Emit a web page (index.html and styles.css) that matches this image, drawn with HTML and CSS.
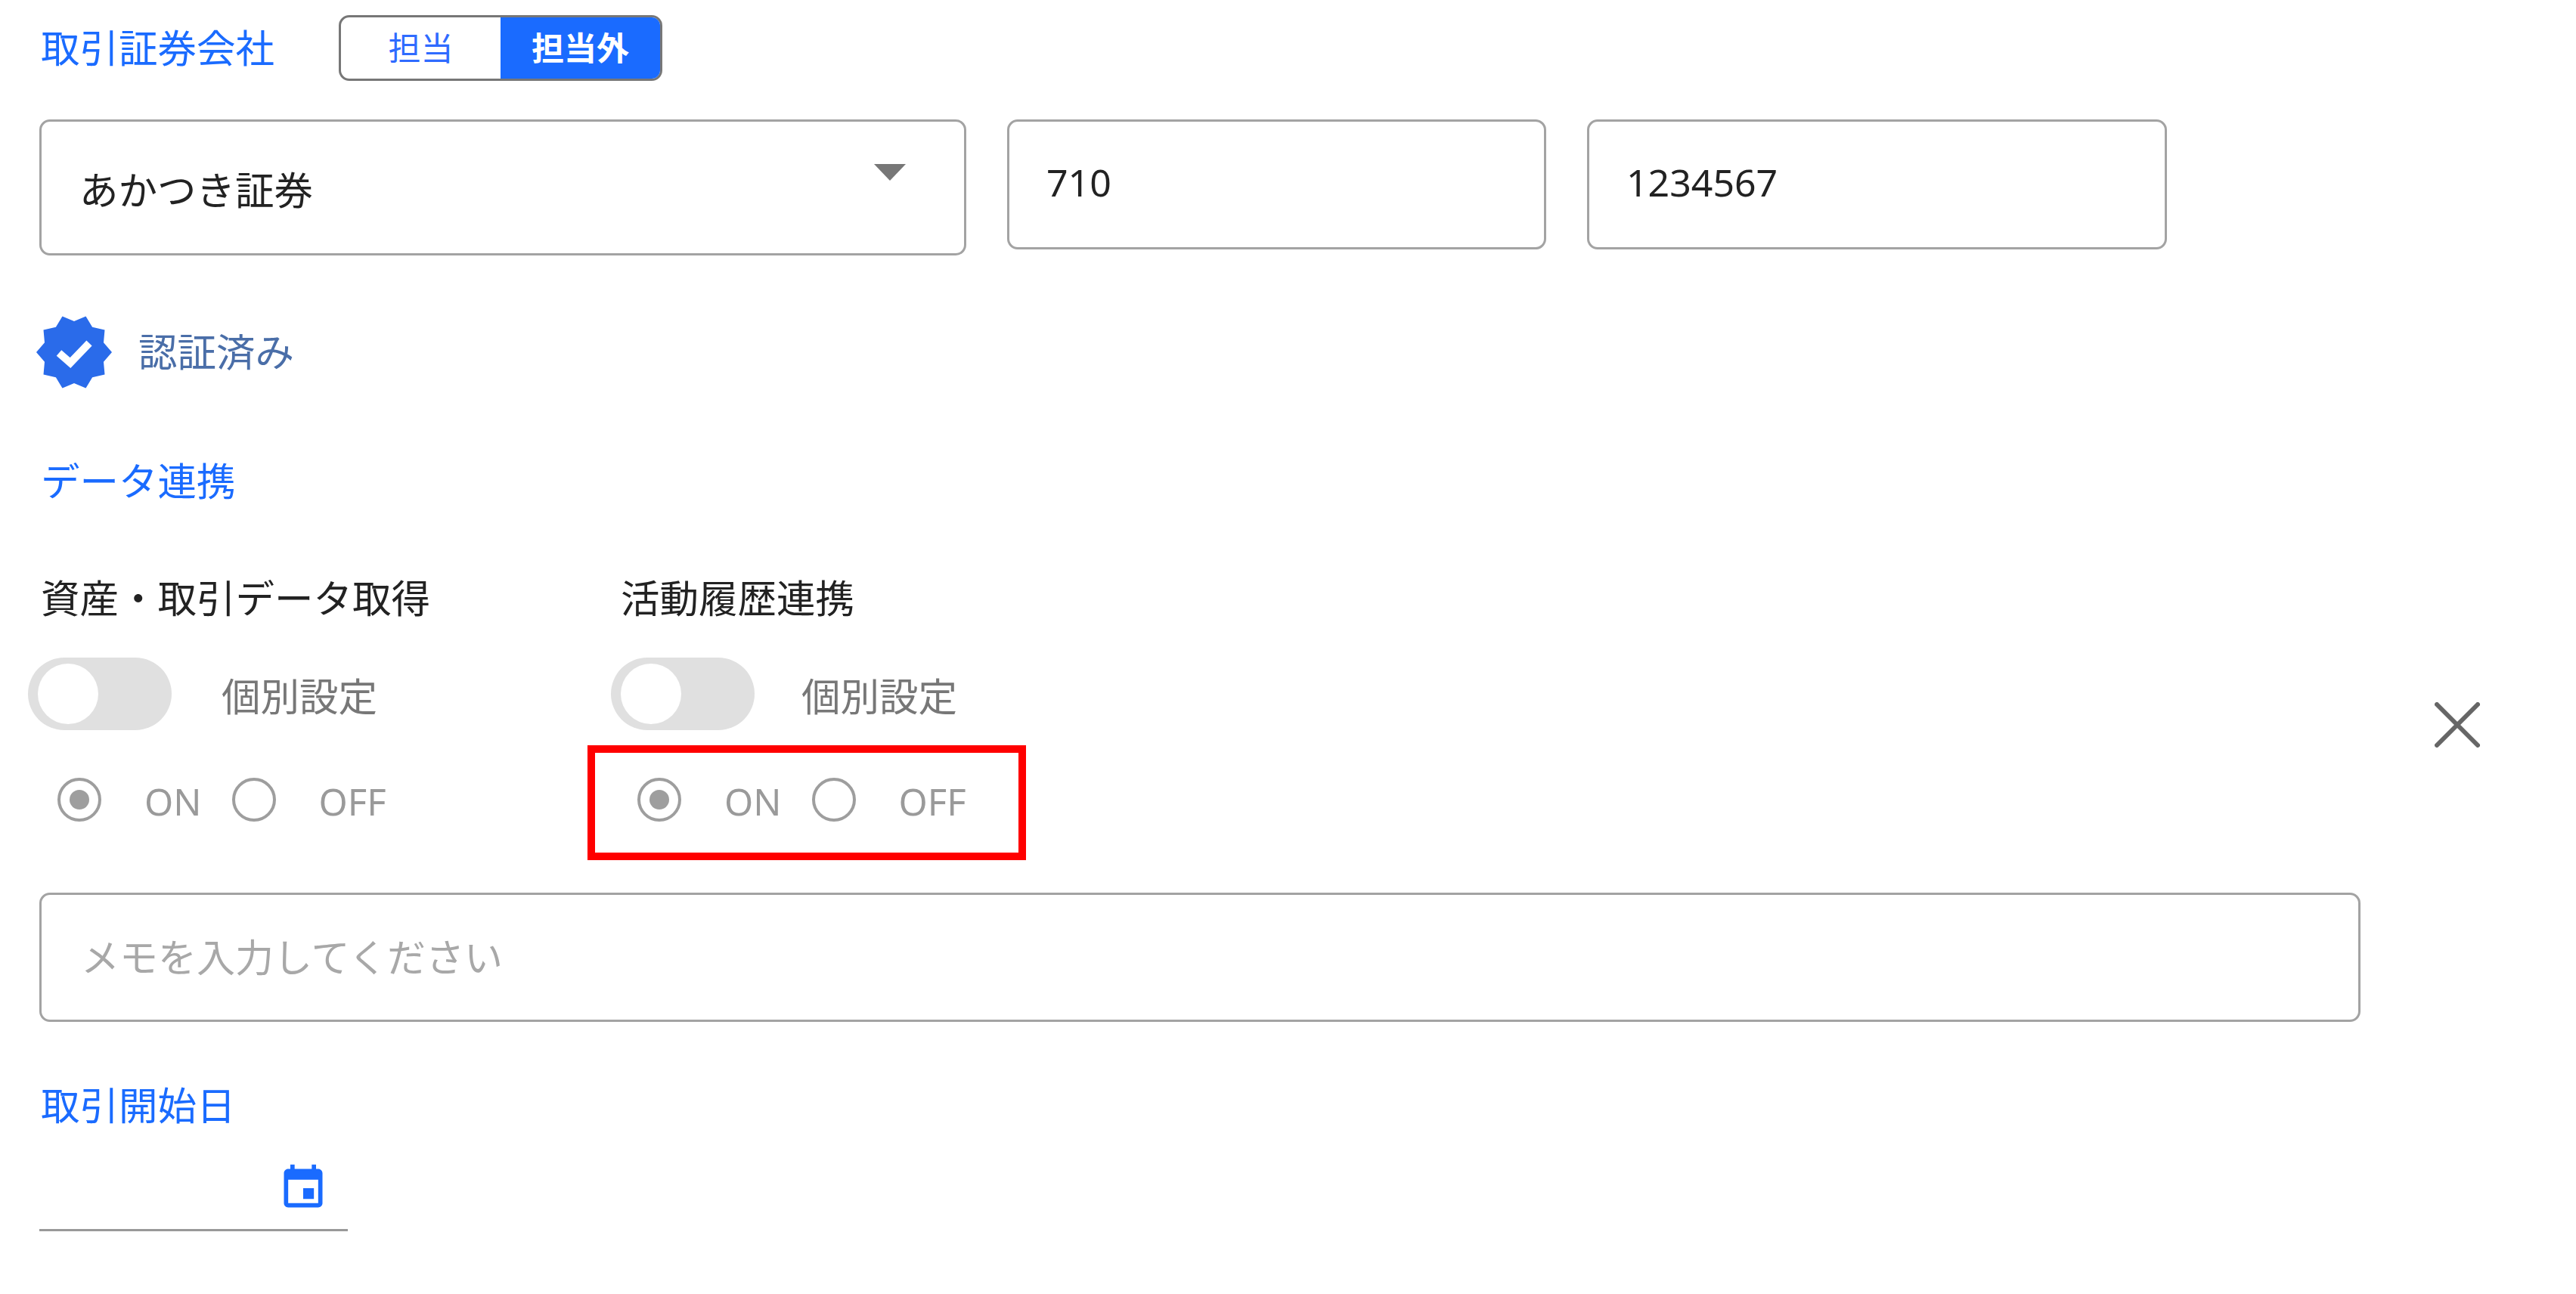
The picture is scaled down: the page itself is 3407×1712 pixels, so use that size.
FILE: index.html
```html
<!DOCTYPE html>
<html lang="ja">

<head>
    <meta charset="UTF-8">
    <title>取引証券会社</title>
    <link rel="stylesheet" href="styles.css">
</head>

<body>
    <div class="page">
        <form class="broker-form">
            <div class="head-row">
                <span class="label">取引証券会社</span>
                <div class="segmented">
                    <span class="segment">担当</span>
                    <span class="segment active">担当外</span>
                </div>
            </div>

            <div class="account-row">
                <div class="field select">
                    <span>あかつき証券</span>
                    <i class="arrow"></i>
                </div>
                <div class="field branch">710</div>
                <div class="field number">1234567</div>
            </div>

            <div class="verified">
                <svg class="badge" viewBox="0 0 100 100">
                    <polygon fill="#2a6bea" points="100,50 89,62.7 90.5,79.4 74.1,83.2 65.5,97.6 50,91 34.5,97.6 25.9,83.2 9.5,79.4 11,62.7 0,50 11,37.3 9.5,20.6 25.9,16.8 34.5,2.4 50,9 65.5,2.4 74.1,16.8 90.5,20.6 89,37.3" />
                    <polyline fill="none" stroke="#fff" stroke-width="10" points="30,51 45,64 70,38" />
                </svg>
                <span>認証済み</span>
            </div>

            <div class="label link-title">データ連携</div>

            <div class="link-columns">
                <div class="link-col">
                    <div class="col-title">資産・取引データ取得</div>
                    <div class="switch-row">
                        <span class="switch"><i></i></span>
                        <span>個別設定</span>
                    </div>
                    <div class="radio-row">
                        <span class="radio checked"></span>
                        <span class="on-text">ON</span>
                        <span class="radio"></span>
                        <span class="off-text">OFF</span>
                    </div>
                </div>
                <div class="link-col">
                    <div class="col-title">活動履歴連携</div>
                    <div class="switch-row">
                        <span class="switch"><i></i></span>
                        <span>個別設定</span>
                    </div>
                    <div class="radio-row">
                        <span class="radio checked"></span>
                        <span class="on-text">ON</span>
                        <span class="radio"></span>
                        <span class="off-text">OFF</span>
                        <div class="highlight"></div>
                    </div>
                </div>
            </div>

            <div class="field memo">メモを入力してください</div>

            <div class="label start-title">取引開始日</div>
            <div class="date-field">
                <svg class="calendar" viewBox="0 0 24 24">
                    <path fill="#1a6bff" d="M17 12h-5v5h5v-5zM16 1v2H8V1H6v2H5c-1.11 0-1.99.9-1.99 2L3 19c0 1.1.89 2 2 2h14c1.1 0 2-.9 2-2V5c0-1.1-.9-2-2-2h-1V1h-2zm3 18H5V8h14v11z" />
                </svg>
            </div>
        </form>

        <svg class="close" viewBox="0 0 60 60">
            <path d="M3 3L57 57M57 3L3 57" stroke="#666" stroke-width="6" stroke-linecap="round" />
        </svg>
    </div>
</body>

</html>
```

FILE: styles.css
```css
body {
    font-family: 'Noto Sans', 'Noto Sans CJK JP', sans-serif;
    font-size: 51.5px;
    line-height: 1;
    color: #222;
    background: #fff;
    margin: 0;
    padding: 0;
}

.page {
    display: flex;
    align-items: flex-start;
    padding: 20px 0 0 52px;
}

.broker-form {
    width: 3070px;
    flex-shrink: 0;
}

.close {
    width: 60px;
    height: 60px;
    margin: 909px 0 0 98px;
}

.label {
    color: #1a6bff;
    height: 51px;
    padding-left: 2px;
}

.head-row {
    display: flex;
    align-items: center;
}

.segmented {
    display: flex;
    width: 428px;
    height: 87px;
    margin-left: 85px;
    border: 3px solid #777;
    border-radius: 14px;
    box-sizing: border-box;
    overflow: hidden;
}

.segment {
    display: flex;
    justify-content: center;
    align-items: center;
    width: 214px;
    font-size: 43px;
    color: #2f6bff;

    &.active {
        flex-grow: 1;
        background: #1a6bff;
        color: #fff;
        font-weight: 700;
    }
}

.field {
    border: 3px solid #a3a3a3;
    border-radius: 14px;
    box-sizing: border-box;
    display: flex;
    align-items: center;
}

.account-row {
    display: flex;
    align-items: flex-start;
    gap: 54px;
    margin-top: 51px;
}

.select {
    justify-content: space-between;
    width: 1226px;
    height: 180px;
    padding: 8px 77px 0 50px;

    .arrow {
        width: 0;
        height: 0;
        margin-top: -48px;
        border-left: 21px solid transparent;
        border-right: 21px solid transparent;
        border-top: 22px solid #777;
    }
}

.branch,
.number {
    height: 172px;
    padding: 0 0 6px 49px;
    font-size: 50px;
}

.branch {
    width: 713px;
}

.number {
    width: 767px;
}

.verified {
    display: flex;
    align-items: center;
    gap: 35px;
    height: 96px;
    margin: 80px 0 0 -4px;
    color: #4a6ea8;

    .badge {
        width: 100px;
        height: 100px;
        flex-shrink: 0;
    }
}

.link-title {
    margin-top: 97px;
}

.link-columns {
    display: flex;
    margin-top: 104px;
}

.link-col {
    width: 767px;
}

.link-col + .link-col .switch-row {
    gap: 62px;
    margin-left: -11px;
}

.col-title {
    height: 51px;
    padding-left: 2px;
}

.switch-row {
    display: flex;
    align-items: center;
    gap: 66px;
    height: 96px;
    margin: 53px 0 0 -15px;
    color: #777;

    span:last-child {
        padding-top: 8px;
    }
}

.switch {
    display: block;
    width: 190px;
    height: 96px;
    padding: 8px 0 0 13px;
    box-sizing: border-box;
    background: #e0e0e0;
    border-radius: 48px;

    i {
        display: block;
        width: 80px;
        height: 80px;
        background: #fff;
        border-radius: 50%;
    }
}

.radio-row {
    position: relative;
    display: flex;
    align-items: center;
    height: 58px;
    margin: 63px 0 0 24px;
    font-size: 49px;
    color: #9a9a9a;
}

.radio {
    display: flex;
    justify-content: center;
    align-items: center;
    width: 58px;
    height: 58px;
    box-sizing: border-box;
    border: 4px solid #9e9e9e;
    border-radius: 50%;

    &.checked::after {
        content: "";
        width: 26px;
        height: 26px;
        background: #9e9e9e;
        border-radius: 50%;
    }
}

.on-text {
    margin: 4px 40px 0 57px;
}

.off-text {
    margin: 4px 0 0 57px;
}

.highlight {
    position: absolute;
    left: -66px;
    top: -43px;
    width: 580px;
    height: 152px;
    box-sizing: border-box;
    border: 10px solid #f00;
}

.memo {
    width: 3070px;
    height: 171px;
    margin-top: 94px;
    padding-left: 52px;
    font-size: 51px;
    color: #a8a8a8;
}

.start-title {
    margin-top: 85px;
}

.date-field {
    display: flex;
    width: 408px;
    height: 88px;
    margin-top: 50px;
    border-bottom: 3px solid #999;
}

.calendar {
    width: 68px;
    height: 68px;
    margin-left: 315px;
}
```
